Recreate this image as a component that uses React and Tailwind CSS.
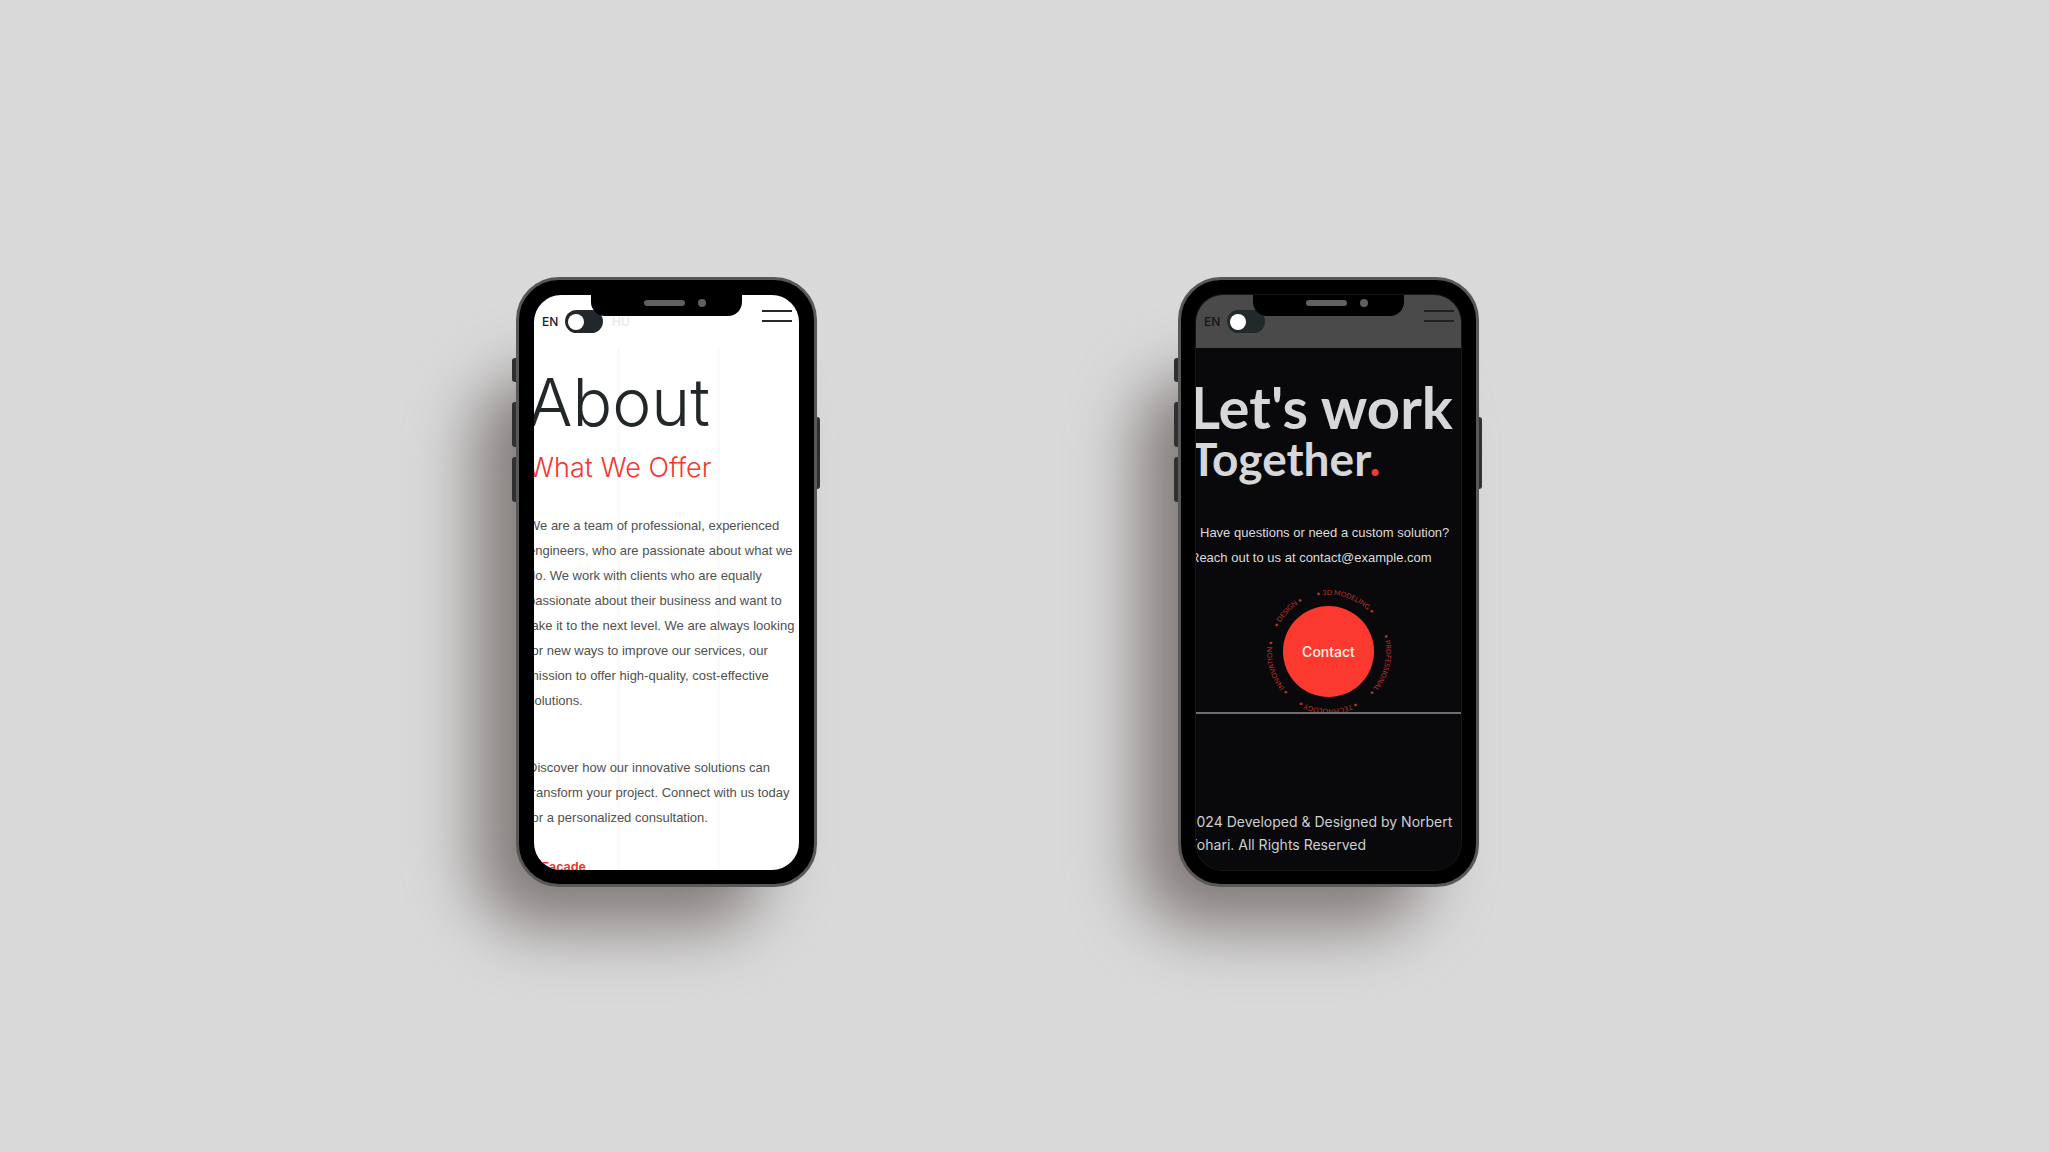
import React, { useState } from "react";

function LanguageBar({ id, dark }) {
  const [hungarian, setHungarian] = useState(false);
  return (
    <header
      className={`flex h-[53px] items-start justify-between pt-[15px] pr-[7px] pl-2 ${dark ? "bg-[#4a4a4a]" : "bg-transparent"}`}
    >
      <label
        htmlFor={id}
        className={`flex cursor-pointer items-center text-[12px] leading-[23px] font-medium ${dark ? "text-[#141618]" : "text-[#1d2124]"}`}
      >
        <span className="w-[23px]">EN</span>
        <input
          id={id}
          type="checkbox"
          role="switch"
          className="peer sr-only"
          checked={hungarian}
          onChange={(e) => setHungarian(e.target.checked)}
        />
        <span
          className={`flex h-[23px] w-[38px] items-center rounded-full px-[3px] peer-checked:justify-end ${dark ? "bg-[#22292b]" : "bg-[#22272b]"}`}
        >
          <span className="size-4 rounded-full bg-white" />
        </span>
        <span className={`ml-[9px] ${dark ? "text-[#4a4a4a]" : "text-[#e9e9e9]"}`}>HU</span>
      </label>
      <button type="button" aria-label="Open menu" className="flex w-[30px] cursor-pointer flex-col gap-2">
        <span className={`h-0.5 w-full ${dark ? "bg-[#1f2122]" : "bg-[#22272b]"}`} />
        <span className={`h-0.5 w-full ${dark ? "bg-[#1f2122]" : "bg-[#22272b]"}`} />
      </button>
    </header>
  );
}

function Phone({ children, dark }) {
  return (
    <div className="relative isolate w-[301px] shrink-0">
      <div className="absolute top-[100px] right-[54px] -bottom-[40px] -left-[40px] -z-10 rounded-[60px] bg-[#827c7a] blur-[32px]" />
      <div className="absolute top-[81px] -left-1 -z-10 flex w-2 flex-col">
        <span className="h-6 rounded-l-[3px] bg-[#303030]" />
        <span className="mt-5 h-[45px] rounded-l-[3px] bg-[#303030]" />
        <span className="mt-[10px] h-[45px] rounded-l-[3px] bg-[#303030]" />
      </div>
      <div className="absolute top-[140px] -right-[3px] -z-10 h-[72px] w-2 rounded-r-[3px] bg-[#303030]" />
      <div className="rounded-[43px] border-[3px] border-[#585858] bg-black p-[15px] pb-[14px]">
        <div
          className={`relative isolate h-[575px] overflow-hidden rounded-[27px] ${dark ? "bg-[#09090b] shadow-[0_0_0_1px_#151517]" : "bg-white"}`}
        >
          {children}
          <div className="absolute top-0 left-[57px] z-10 flex h-[21px] w-[151px] items-start rounded-b-[14px] bg-black pt-1 pl-[53px]">
            <span className="mt-px h-1.5 w-[41px] rounded-full bg-[#606060]" />
            <span className="ml-[13px] size-2 rounded-full bg-[#606060]" />
          </div>
        </div>
      </div>
    </div>
  );
}

function AboutScreen() {
  return (
    <>
      <div className="absolute inset-x-0 top-[53px] bottom-0 -z-10 flex gap-[97px] pl-[83px]">
        <span className="w-[3px] bg-[#fafafa]" />
        <span className="w-[3px] bg-[#fafafa]" />
      </div>
      <LanguageBar id="about-language" />
      <main className="-ml-1.5">
        <h1 className="mt-[22px] text-[66px] leading-[64px] font-light text-[#22272a]">About</h1>
        <h2 className="mt-4 text-[27px] leading-[36px] font-light text-[#f5382f]">What We Offer</h2>
        <div className="font-['Liberation_Sans',sans-serif] text-[13px] leading-[25px] text-[#505050]">
          <p className="mt-[27px]">
            We are a team of professional, experienced engineers, who are passionate about what we do. We work with
            clients who are equally passionate about their business and want to take it to the next level. We are
            always looking for new ways to improve our services, our mission to offer high-quality, cost-effective
            solutions.
          </p>
          <p className="mt-[42px]">
            Discover how our innovative solutions can transform your project. Connect with us today for a
            personalized consultation.
          </p>
          <h3 className="mt-6 ml-[13px] font-bold text-[#e8342c]">Facade</h3>
        </div>
      </main>
    </>
  );
}

const RING = [
  { word: "3D MODELING", angle: 18 },
  { word: "PROFESSIONAL", angle: 104 },
  { word: "TECHNOLOGY", angle: 181 },
  { word: "INNOVATION", angle: 253 },
  { word: "DESIGN", angle: 314 },
];

function ContactRing() {
  return (
    <div className="mt-[18px] grid h-[124px] justify-center overflow-hidden">
      <svg viewBox="-64 -64 128 128" className="col-start-1 row-start-1 size-32 overflow-visible">
        <defs>
          <path id="ring-arc" d="M -57 0 A 57 57 0 0 1 57 0" />
        </defs>
        {RING.map(({ word, angle }) => (
          <text
            key={word}
            transform={`rotate(${angle})`}
            textAnchor="middle"
            className="fill-[#c2332d] font-['Lato',sans-serif] text-[7px]"
          >
            <textPath href="#ring-arc" startOffset="50%">{`• ${word} •`}</textPath>
          </text>
        ))}
      </svg>
      <button
        type="button"
        className="col-start-1 row-start-1 mt-[18px] size-[91px] cursor-pointer justify-self-center rounded-full bg-[#fb392e] text-[14px] font-medium text-[#fff1e8]"
      >
        Contact
      </button>
    </div>
  );
}

function ContactScreen() {
  return (
    <>
      <LanguageBar id="contact-language" dark />
      <main>
        <h1 className="mt-[30px] -ml-1.5 font-['Lato',sans-serif] font-bold whitespace-nowrap text-[#d5d7da]">
          <span className="block text-[58px] leading-[58px]">Let's work</span>
          <span className="block text-[46px] leading-[46px]">
            Together<span className="text-[#f5382f]">.</span>
          </span>
        </h1>
        <p className="mt-[38px] -ml-1.5 indent-[10px] font-['Liberation_Sans',sans-serif] text-[13px] leading-[25px] text-[#dcdcdc]">
          Have questions or need a custom solution? Reach out to us at{" "}
          <a href="mailto:contact@example.com">contact@example.com</a>
        </p>
        <ContactRing />
      </main>
      <footer className="border-t-2 border-[#6f6f6f] pt-24">
        <p className="-ml-2 text-[14px] leading-[23px] text-[#cdcfd0]">
          2024 Developed &amp; Designed by Norbert Kohari. All Rights Reserved
        </p>
      </footer>
    </>
  );
}

export default function App() {
  return (
    <div className="flex min-h-screen items-center justify-center gap-[361px] overflow-hidden bg-[#d9d9d9] pt-3 pr-[54px] font-['Inter',sans-serif]">
      <Phone>
        <AboutScreen />
      </Phone>
      <Phone dark>
        <ContactScreen />
      </Phone>
    </div>
  );
}
